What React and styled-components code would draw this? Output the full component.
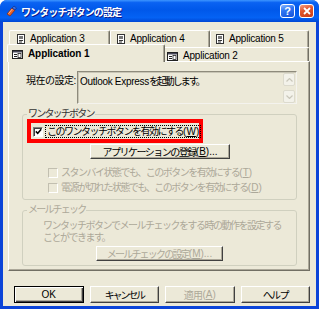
import styled, { createGlobalStyle } from "styled-components";

const GlobalStyle = createGlobalStyle`
  html, body {
    margin: 0;
    padding: 0;
    background: #ffffff;
  }
  body {
    font-family: "Liberation Sans", "Noto Sans CJK JP", sans-serif;
    font-size: 10px;
    color: #000;
    text-autospace: no-autospace;
  }
`;

const FONT = `"Liberation Sans", "Noto Sans CJK JP", sans-serif`;
const FACE = "#ECE9D8";
const GRAY_TEXT = "#ACA899";

const Window = styled.div`
  width: 319px;
  height: 309px;
  display: flex;
  flex-direction: column;
  border-radius: 7px 7px 0 0;
  overflow: hidden;
  background: #0a46dc;
`;

const TitleBar = styled.div`
  height: 22px;
  flex: 0 0 22px;
  display: flex;
  align-items: center;
  padding: 0 5px 0 5px;
  background: linear-gradient(
    180deg,
    #3d95ff 0%,
    #0a62f2 12%,
    #0058ea 45%,
    #0462f4 80%,
    #0047d4 100%
  );
`;

const TitleIcon = styled.svg`
  flex: 0 0 auto;
  margin-right: 4px;
`;

const TitleText = styled.div`
  flex: 1;
  color: #fff;
  font-family: ${FONT};
  font-size: 10px;
  font-weight: bold;
  letter-spacing: -0.9px;
  text-shadow: 1px 1px 0 #0a1a8c;
  white-space: nowrap;
`;

const CaptionButtons = styled.div`
  display: flex;
  gap: 4px;
`;

const CaptionButton = styled.div`
  width: 15px;
  height: 14px;
  box-sizing: border-box;
  border: 1px solid #fff;
  border-radius: 3px;
  display: flex;
  align-items: center;
  justify-content: center;
  color: #fff;
  font-family: ${FONT};
  font-weight: bold;
  font-size: 11px;
  background: ${(p) =>
    p.$kind === "close"
      ? "linear-gradient(160deg, #f0a088 0%, #e2582f 40%, #c83a14 100%)"
      : "linear-gradient(160deg, #8cb8ff 0%, #2f76f3 40%, #1551d8 100%)"};
`;

const Body = styled.div`
  flex: 1;
  display: flex;
  flex-direction: column;
  background: ${FACE};
  border: 3px solid #0b44d8;
  border-top: 0;
  padding: 8px 6px 0 5px;
`;

const TabRows = styled.div`
  display: flex;
  flex-direction: column;
`;

const TabRow = styled.div`
  display: flex;
  width: 300px;
  height: ${(p) => p.$h}px;
  margin-left: 1px;
  position: relative;
  z-index: ${(p) => p.$z};
`;

const Tab = styled.div`
  box-sizing: border-box;
  display: flex;
  align-items: flex-start;
  gap: 5px;
  background: ${FACE};
  border-top: 1px solid #fff;
  border-left: 1px solid #fff;
  border-right: 1px solid #716f64;
  box-shadow: inset -1px 0 0 #aca899;
  border-radius: 2px 2px 0 0;
  font-family: ${FONT};
  font-size: 10px;
  line-height: 11px;
  letter-spacing: -0.2px;
  white-space: nowrap;
  ${(p) =>
    p.$selected
      ? `
    flex: 0 0 158px;
    height: 18px;
    margin: -3px -2px 0 -2px;
    padding: 3px 0 0 4px;
    font-weight: bold;
    letter-spacing: -0.1px;
    position: relative;
    z-index: 3;
  `
      : `
    flex: 1;
    height: 100%;
    padding: 2px 0 0 ${p.$pad}px;
  `}
`;

const Panel = styled.div`
  position: relative;
  z-index: 1;
  height: 210px;
  box-sizing: border-box;
  display: flex;
  flex-direction: column;
  border: 1px solid;
  border-color: #fff #716f64 #716f64 #fff;
  box-shadow: inset -1px -1px 0 #aca899;
  padding: 9px 12px 0 13px;
`;

const SettingRow = styled.div`
  display: flex;
  align-items: flex-start;
  padding-left: 4px;
`;

const SettingLabel = styled.div`
  width: 51px;
  padding-top: 1px;
  letter-spacing: -0.5px;
  white-space: nowrap;
`;

const ReadOnlyBox = styled.div`
  flex: 1;
  height: 33px;
  box-sizing: border-box;
  display: flex;
  border: 1px solid;
  border-color: #8e8b7c #f4f3ee #f4f3ee #8e8b7c;
  box-shadow: inset 1px 1px 0 #c9c6b6;
`;

const ReadOnlyText = styled.div`
  flex: 1;
  padding: 1px 2px;
  white-space: nowrap;
`;

const Run = styled.span`
  letter-spacing: ${(p) => p.$ls}px;
`;

const ScrollBar = styled.div`
  width: 12px;
  display: flex;
  flex-direction: column;
  justify-content: space-between;
  padding: 1px 1px 0 0;
`;

const ScrollArrow = styled.div`
  height: 13px;
  box-sizing: border-box;
  border: 1px solid #dcdacd;
  border-radius: 2px;
  background: #f3f2ea;
  display: flex;
  align-items: center;
  justify-content: center;
`;

const Group = styled.fieldset`
  margin: ${(p) => p.$top}px 0 0 0;
  padding: 0 0 ${(p) => p.$bottom}px 4px;
  border: 1px solid #d0d0bf;
  border-radius: 3px;
  min-width: 0;
  display: flex;
  flex-direction: column;
  align-items: flex-start;
`;

const Legend = styled.legend`
  padding: 0 1px;
  margin: 0;
  font-size: 10px;
  line-height: 10px;
  letter-spacing: -1.8px;
  color: ${(p) => (p.$disabled ? GRAY_TEXT : "#333")};
`;

const Highlight = styled.div`
  width: 176px;
  height: 24px;
  box-sizing: border-box;
  border: 4px solid #ff0000;
  display: flex;
  align-items: center;
  padding: 1px 0 0 2px;
`;

const CheckRow = styled.div`
  display: flex;
  align-items: center;
  gap: 3px;
  margin-left: ${(p) => p.$indent || 0}px;
  margin-top: ${(p) => p.$top || 0}px;
  color: ${(p) => (p.$disabled ? GRAY_TEXT : "#000")};
  letter-spacing: -1.5px;
  line-height: 11px;
  white-space: nowrap;
`;

const Box = styled.span`
  width: 10px;
  height: 10px;
  box-sizing: border-box;
  display: flex;
  align-items: center;
  justify-content: center;
  border: 1px solid;
  border-color: ${(p) =>
    p.$disabled ? "#c2bfb0 #fff #fff #c2bfb0" : "#808080 #fff #fff #808080"};
  background: ${(p) => (p.$disabled ? FACE : "#fff")};
  box-shadow: ${(p) => (p.$disabled ? "none" : "inset 1px 1px 0 #404040")};
`;

const FocusLabel = styled.span`
  outline: 1px dotted #000;
  padding: 0 1px;
  line-height: 11px;
`;

const Button = styled.div`
  box-sizing: border-box;
  width: ${(p) => p.$w}px;
  height: ${(p) => p.$h}px;
  margin-left: ${(p) => p.$left || 0}px;
  margin-top: ${(p) => p.$top || 0}px;
  display: flex;
  align-items: center;
  justify-content: center;
  background: ${FACE};
  font-family: ${FONT};
  font-size: 10px;
  letter-spacing: ${(p) => p.$ls || 0}px;
  white-space: nowrap;
  color: ${(p) => (p.$disabled ? GRAY_TEXT : "#000")};
  border: 1px solid;
  border-color: ${(p) =>
    p.$default ? "#000" : "#fff #404040 #404040 #fff"};
  box-shadow: ${(p) =>
    p.$default
      ? "inset 1px 1px 0 #fff, inset -1px -1px 0 #404040, inset -2px -2px 0 #aca899"
      : "inset -1px -1px 0 #aca899"};
`;

const Description = styled.div`
  margin: 5px 0 0 16px;
  line-height: 12px;
  letter-spacing: -1.5px;
  color: ${GRAY_TEXT};
  white-space: nowrap;
`;

const Footer = styled.div`
  display: flex;
  gap: 6px;
  margin-top: 15px;
  padding-left: 6px;
`;

const Mnemonic = styled.span`
  letter-spacing: 0;
  u {
    text-decoration: underline;
  }
`;

function Key({ k, tail = "" }) {
  return (
    <Mnemonic>
      (<u>{k}</u>){tail}
    </Mnemonic>
  );
}

function AppIcon() {
  return (
    <TitleIcon width="12" height="12" viewBox="0 0 12 12">
      <path d="M2 9 L7 3 L10 5 L5 11 Z" fill="#e8632b" stroke="#8a2a08" strokeWidth="0.7" />
      <path d="M7 3 L9 1 L11.5 3 L10 5 Z" fill="#3a6fe0" stroke="#12308a" strokeWidth="0.7" />
      <path d="M3.5 8.6 L7.3 4" stroke="#ffd0b0" strokeWidth="0.8" />
    </TitleIcon>
  );
}

function PageIcon() {
  return (
    <svg width="8" height="10" viewBox="0 0 8 10" style={{ marginTop: 1, flex: "0 0 auto" }}>
      <rect x="0.5" y="0.5" width="7" height="9" fill="#fff" stroke="#333" />
      <rect x="2" y="2" width="4" height="3" fill="#777" />
      <path d="M2 6.5h4M2 8h3" stroke="#333" />
    </svg>
  );
}

function FormIcon() {
  return (
    <svg width="11" height="9" viewBox="0 0 11 9" style={{ marginTop: 2, flex: "0 0 auto" }}>
      <rect x="0.5" y="0.5" width="10" height="8" fill="#fff" stroke="#222" />
      <rect x="1" y="1" width="9" height="1.5" fill="#445" />
      <path d="M2 4.5h3M2 6.5h3" stroke="#222" />
      <rect x="6" y="3.5" width="3" height="4" fill="none" stroke="#222" strokeWidth="0.8" />
    </svg>
  );
}

function Chevron({ up }) {
  return (
    <svg width="7" height="4" viewBox="0 0 7 4">
      <path
        d={up ? "M0.5 3.5 L3.5 0.5 L6.5 3.5" : "M0.5 0.5 L3.5 3.5 L6.5 0.5"}
        fill="none"
        stroke="#c9c7ba"
        strokeWidth="1.2"
      />
    </svg>
  );
}

function CheckMark() {
  return (
    <svg width="7" height="7" viewBox="0 0 7 7">
      <path d="M0.8 3.4 L2.7 5.3 L6.2 1.2" fill="none" stroke="#000" strokeWidth="1.5" />
    </svg>
  );
}

const backTabs = [
  { label: "Application 3", pad: 7 },
  { label: "Application 4", pad: 6 },
  { label: "Application 5", pad: 5 },
];

export default function App() {
  return (
    <>
      <GlobalStyle />
      <Window>
        <TitleBar>
          <AppIcon />
          <TitleText>ワンタッチボタンの設定</TitleText>
          <CaptionButtons>
            <CaptionButton $kind="help">?</CaptionButton>
            <CaptionButton $kind="close">
              <svg width="8" height="8" viewBox="0 0 8 8">
                <path d="M1 1 L7 7 M7 1 L1 7" stroke="#fff" strokeWidth="1.8" />
              </svg>
            </CaptionButton>
          </CaptionButtons>
        </TitleBar>

        <Body>
          <TabRows>
            <TabRow $h={17} $z={1}>
              {backTabs.map((t) => (
                <Tab key={t.label} $pad={t.pad}>
                  <PageIcon />
                  {t.label}
                </Tab>
              ))}
            </TabRow>
            <TabRow $h={14} $z={2}>
              <Tab $selected>
                <FormIcon />
                Application 1
              </Tab>
              <Tab $pad={3}>
                <FormIcon />
                Application 2
              </Tab>
            </TabRow>
          </TabRows>

          <Panel>
            <SettingRow>
              <SettingLabel>現在の設定:</SettingLabel>
              <ReadOnlyBox>
                <ReadOnlyText>
                  <Run $ls={-0.3}>Outlook Express</Run>
                  <Run $ls={-2}>を起動します。</Run>
                </ReadOnlyText>
                <ScrollBar>
                  <ScrollArrow>
                    <Chevron up />
                  </ScrollArrow>
                  <ScrollArrow>
                    <Chevron />
                  </ScrollArrow>
                </ScrollBar>
              </ReadOnlyBox>
            </SettingRow>

            <Group $top={5} $bottom={6}>
              <Legend>ワンタッチボタン</Legend>
              <Highlight>
                <CheckRow>
                  <Box>
                    <CheckMark />
                  </Box>
                  <FocusLabel>
                    このワンタッチボタンを有効にする<Key k="W" />
                  </FocusLabel>
                </CheckRow>
              </Highlight>
              <Button $w={140} $h={15} $left={63} $top={1} $ls={-1.5}>
                アプリケーションの登録<Key k="B" tail="..." />
              </Button>
              <CheckRow $disabled $indent={21} $top={8}>
                <Box $disabled />
                <span>
                  スタンバイ状態でも、このボタンを有効にする<Key k="T" />
                </span>
              </CheckRow>
              <CheckRow $disabled $indent={21} $top={4}>
                <Box $disabled />
                <span>
                  電源が切れた状態でも、このボタンを有効にする<Key k="D" />
                </span>
              </CheckRow>
            </Group>

            <Group $top={5} $bottom={4}>
              <Legend $disabled>メールチェック</Legend>
              <Description>
                ワンタッチボタンでメールチェックをする時の動作を設定する
                <br />
                ことができます。
              </Description>
              <Button $w={127} $h={15} $left={69} $top={2} $ls={-1.8} $disabled>
                メールチェックの設定<Key k="M" tail="..." />
              </Button>
            </Group>
          </Panel>

          <Footer>
            <Button $w={70} $h={17} $default>
              OK
            </Button>
            <Button $w={70} $h={17} $ls={-2.2}>
              キャンセル
            </Button>
            <Button $w={70} $h={17} $ls={-0.7} $disabled>
              適用<Key k="A" />
            </Button>
            <Button $w={70} $h={17} $ls={-1.7}>
              ヘルプ
            </Button>
          </Footer>
        </Body>
      </Window>
    </>
  );
}
